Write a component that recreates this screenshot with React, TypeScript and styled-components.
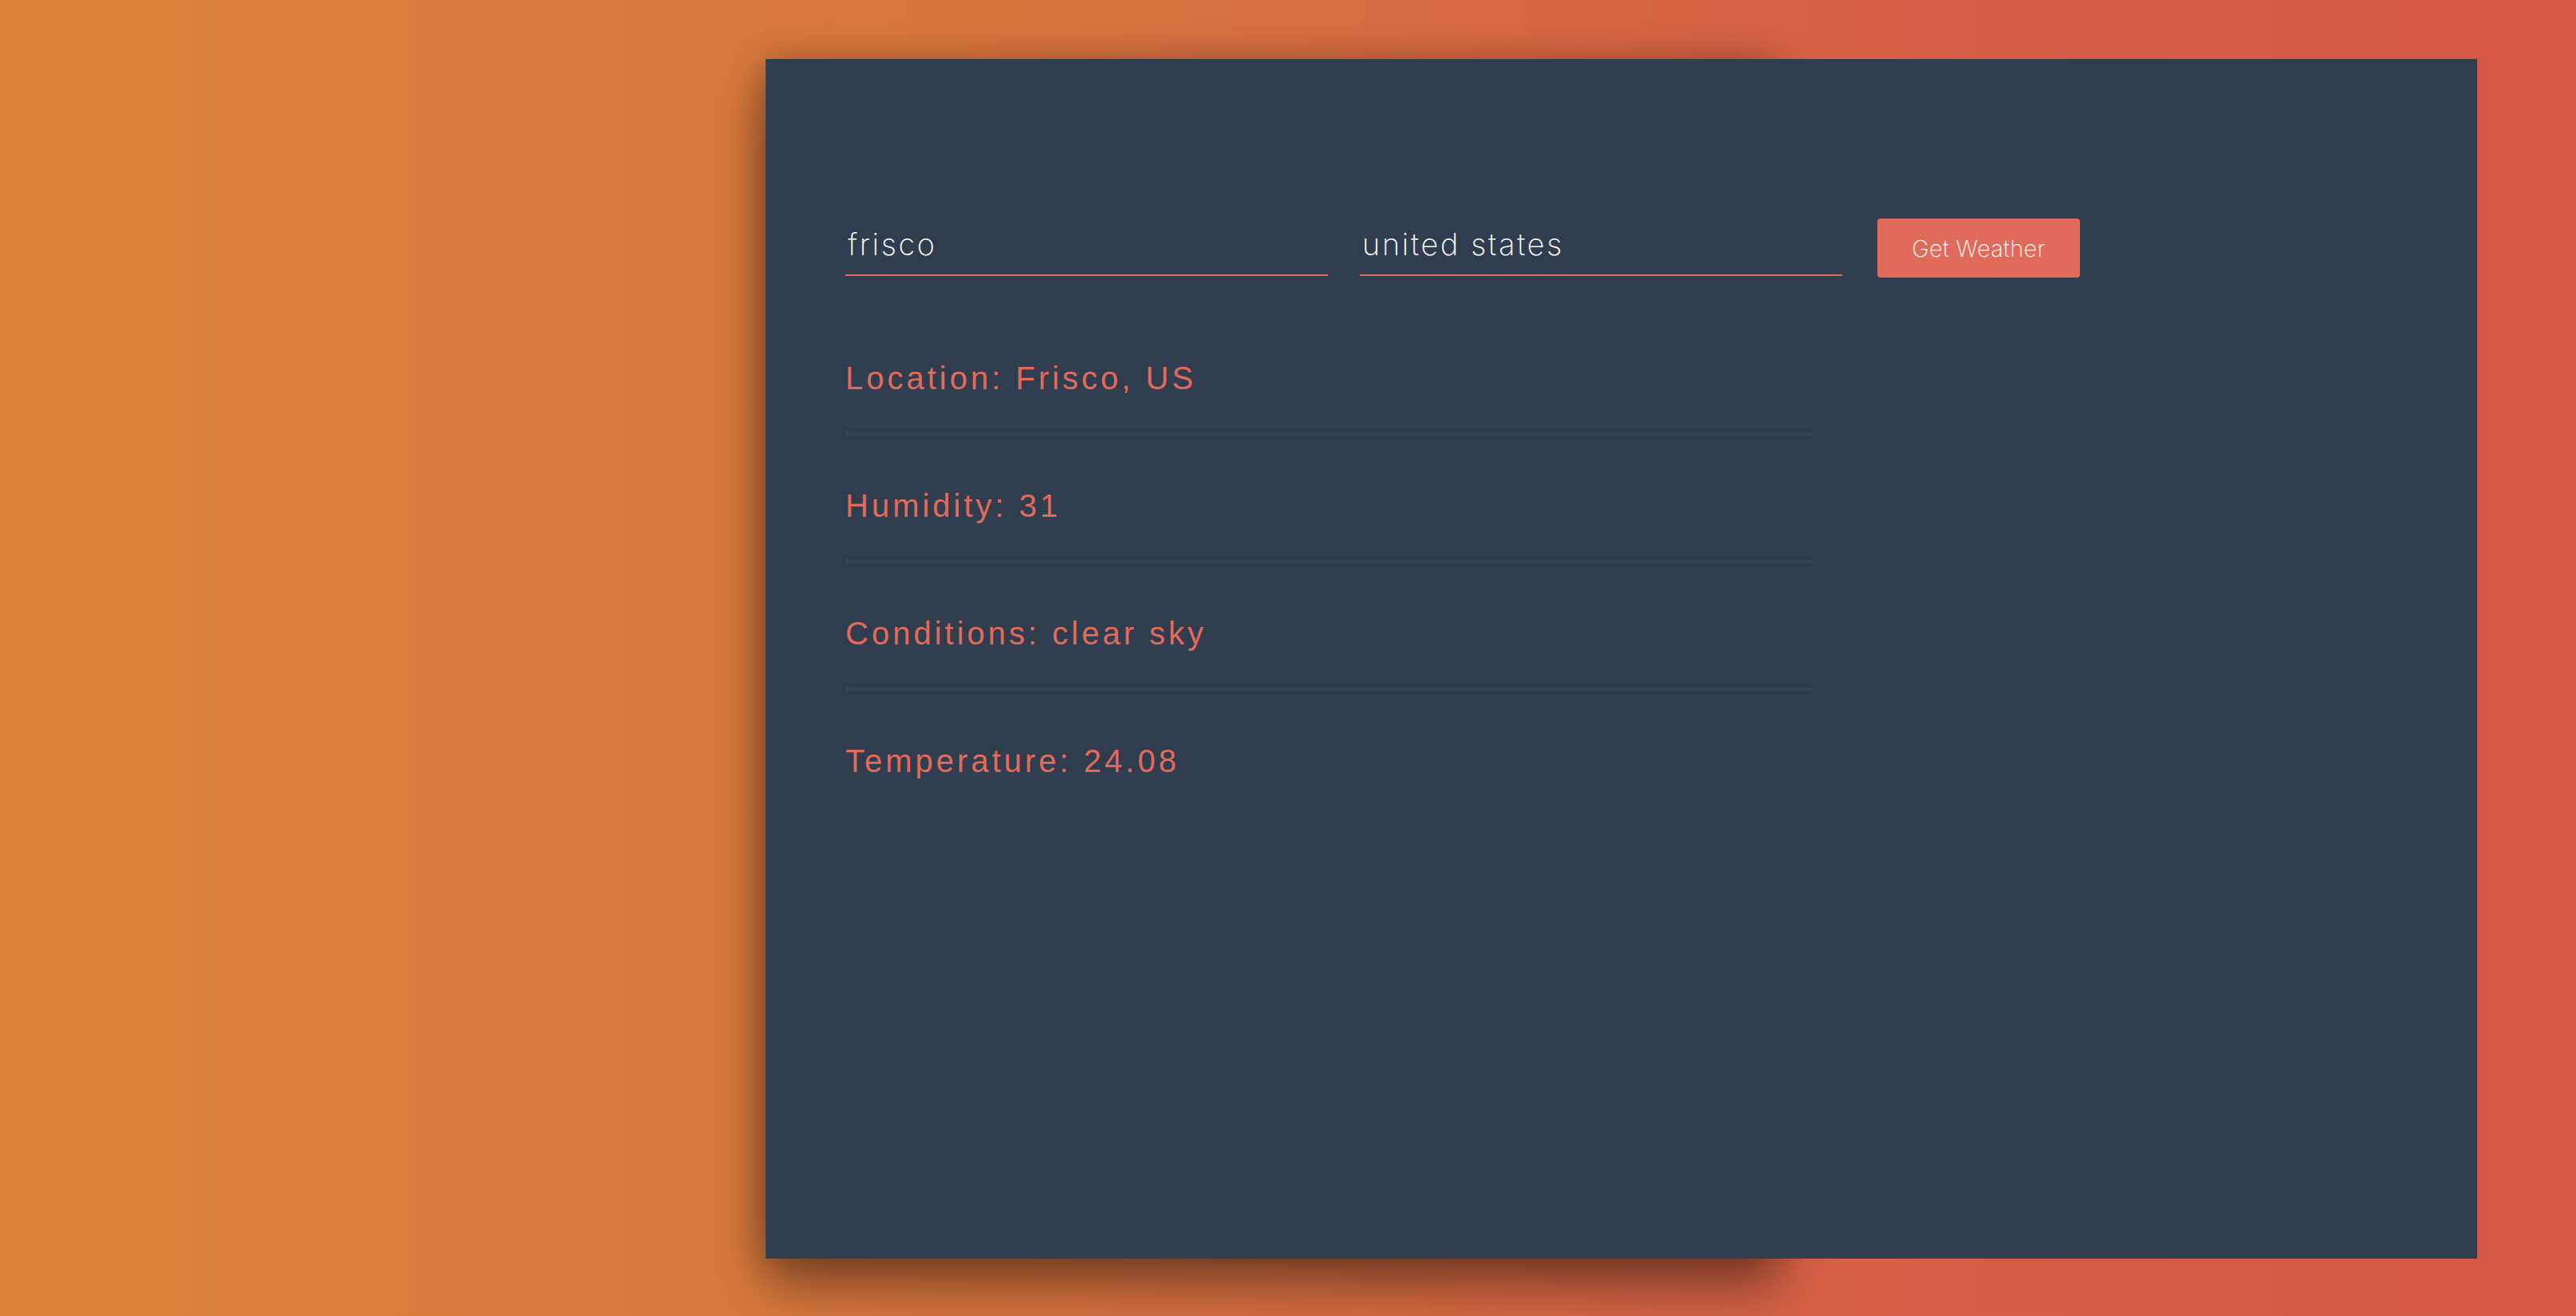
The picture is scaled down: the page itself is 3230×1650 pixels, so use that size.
import styled, { createGlobalStyle } from 'styled-components';

const GlobalStyle = createGlobalStyle`
  html, body {
    margin: 0;
    padding: 0;
  }
  body {
    width: 3230px;
    height: 1650px;
    overflow: hidden;
    background: linear-gradient(to right, #db843a 0%, #d8753f 40%, #d65e47 75%, #d55845 100%);
    font-family: "Liberation Sans", Arial, sans-serif;
  }
`;

const rows = [
  { label: 'Location', value: 'Frisco, US' },
  { label: 'Humidity', value: '31' },
  { label: 'Conditions', value: 'clear sky' },
  { label: 'Temperature', value: '24.08' },
];

export default function App() {
  return (
    <>
      <GlobalStyle />
      <Page>
        <TitleArea />
        <Panel>
          <Form onSubmit={(e) => e.preventDefault()}>
            <Input name="city" defaultValue="frisco" $gap={40} />
            <Input name="country" defaultValue="united states" $gap={44} />
            <Button type="submit">Get Weather</Button>
          </Form>
          <InfoList>
            {rows.map((row) => (
              <InfoRow key={row.label}>
                {row.label}: {row.value}
              </InfoRow>
            ))}
          </InfoList>
        </Panel>
      </Page>
    </>
  );
}

const Page = styled.div`
  display: grid;
  grid-template-columns: 960px 2146px;
  padding-top: 74px;
  height: 1650px;
  box-sizing: border-box;
`;

const TitleArea = styled.div``;

const Panel = styled.div`
  position: relative;
  height: 1504px;
  background: #303d4f;
  padding: 200px 0 0 100px;
  box-sizing: border-box;

  &::before {
    content: '';
    position: absolute;
    left: 0;
    top: 0;
    bottom: 0;
    width: 1270px;
    z-index: -1;
    box-shadow: 0 34px 64px rgba(0, 0, 0, 0.42), -4px 0 40px rgba(0, 0, 0, 0.2);
  }
`;

const Form = styled.form`
  display: flex;
  align-items: flex-end;
  height: 74px;
`;

const Input = styled.input<{ $gap: number }>`
  width: 605px;
  height: 64px;
  margin: 0 ${(p) => p.$gap}px 2px 0;
  padding: 0 0 14px 3px;
  box-sizing: border-box;
  background: transparent;
  border: 0;
  border-bottom: 2px solid #e16b5b;
  outline: none;
  color: #ffffff;
  font-family: Inter, Roboto, "Liberation Sans", sans-serif;
  font-weight: 200;
  font-size: 38px;
  letter-spacing: 2.6px;
`;

const Button = styled.button`
  width: 254px;
  height: 74px;
  padding: 0;
  border: 0;
  border-radius: 4px;
  background: #e16b5b;
  color: #ffffff;
  font-family: Inter, Roboto, "Liberation Sans", sans-serif;
  font-weight: 200;
  font-size: 29px;
  letter-spacing: 0.3px;
  cursor: pointer;
`;

const InfoList = styled.div`
  width: 1210px;
  margin-top: 38px;
`;

const InfoRow = styled.div`
  padding: 64px 0 44px;
  border-bottom: 4px solid rgba(255, 255, 255, 0.04);
  color: #e16b5b;
  font-size: 40px;
  line-height: 48px;
  letter-spacing: 4px;

  &:last-child {
    border-bottom: 0;
  }
`;
